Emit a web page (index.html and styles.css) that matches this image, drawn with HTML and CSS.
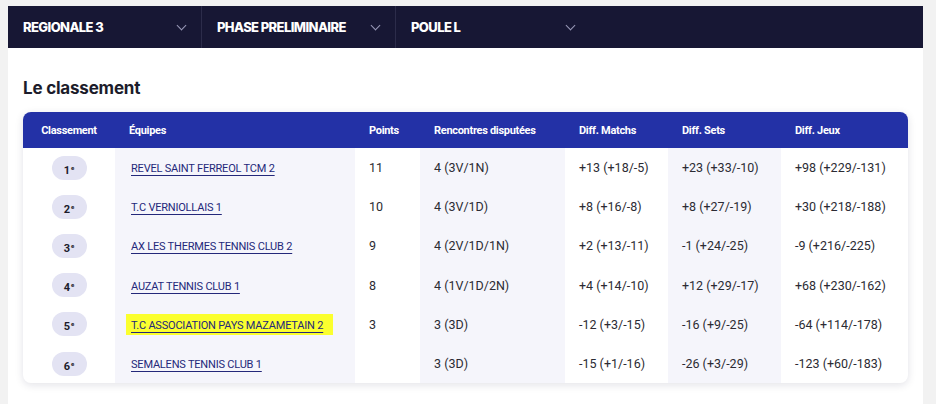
FILE: index.html
```html
<!DOCTYPE html>
<html lang="fr">
<head>
  <meta charset="UTF-8">
  <meta name="viewport" content="width=device-width, initial-scale=1.0">
  <title>Le classement</title>
  <link rel="stylesheet" href="styles.css">
</head>
<body>
  <div class="page">
    <nav class="filters">
      <div class="filter">REGIONALE 3 <span class="chevron"></span></div>
      <div class="filter">PHASE PRELIMINAIRE <span class="chevron"></span></div>
      <div class="filter">POULE L <span class="chevron"></span></div>
    </nav>

    <section class="content">
      <h2>Le classement</h2>
      <div class="card">
        <table class="ranking">
          <colgroup>
            <col class="c-rank">
            <col class="c-team">
            <col class="c-pts">
            <col class="c-played">
            <col class="c-matchs">
            <col class="c-sets">
            <col class="c-jeux">
          </colgroup>
          <thead>
            <tr>
              <th class="center">Classement</th>
              <th>Équipes</th>
              <th>Points</th>
              <th>Rencontres disputées</th>
              <th>Diff. Matchs</th>
              <th>Diff. Sets</th>
              <th>Diff. Jeux</th>
            </tr>
          </thead>
          <tbody>
            <tr>
              <td class="center"><span class="badge">1<sup>e</sup></span></td>
              <td class="shade"><a href="#">REVEL SAINT FERREOL TCM 2</a></td>
              <td>11</td>
              <td class="shade">4 (3V/1N)</td>
              <td>+13 (+18/-5)</td>
              <td class="shade">+23 (+33/-10)</td>
              <td>+98 (+229/-131)</td>
            </tr>
            <tr>
              <td class="center"><span class="badge">2<sup>e</sup></span></td>
              <td class="shade"><a href="#">T.C VERNIOLLAIS 1</a></td>
              <td>10</td>
              <td class="shade">4 (3V/1D)</td>
              <td>+8 (+16/-8)</td>
              <td class="shade">+8 (+27/-19)</td>
              <td>+30 (+218/-188)</td>
            </tr>
            <tr>
              <td class="center"><span class="badge">3<sup>e</sup></span></td>
              <td class="shade"><a href="#">AX LES THERMES TENNIS CLUB 2</a></td>
              <td>9</td>
              <td class="shade">4 (2V/1D/1N)</td>
              <td>+2 (+13/-11)</td>
              <td class="shade">-1 (+24/-25)</td>
              <td>-9 (+216/-225)</td>
            </tr>
            <tr>
              <td class="center"><span class="badge">4<sup>e</sup></span></td>
              <td class="shade"><a href="#">AUZAT TENNIS CLUB 1</a></td>
              <td>8</td>
              <td class="shade">4 (1V/1D/2N)</td>
              <td>+4 (+14/-10)</td>
              <td class="shade">+12 (+29/-17)</td>
              <td>+68 (+230/-162)</td>
            </tr>
            <tr>
              <td class="center"><span class="badge">5<sup>e</sup></span></td>
              <td class="shade"><span class="marker"><a href="#">T.C ASSOCIATION PAYS MAZAMETAIN 2</a></span></td>
              <td>3</td>
              <td class="shade">3 (3D)</td>
              <td>-12 (+3/-15)</td>
              <td class="shade">-16 (+9/-25)</td>
              <td>-64 (+114/-178)</td>
            </tr>
            <tr>
              <td class="center"><span class="badge">6<sup>e</sup></span></td>
              <td class="shade"><a href="#">SEMALENS TENNIS CLUB 1</a></td>
              <td></td>
              <td class="shade">3 (3D)</td>
              <td>-15 (+1/-16)</td>
              <td class="shade">-26 (+3/-29)</td>
              <td>-123 (+60/-183)</td>
            </tr>
          </tbody>
        </table>
      </div>
    </section>
  </div>
</body>
</html>
```

FILE: styles.css
```css
:root {
  --navy: #171734;
  --blue: #2331a6;
  --shade: #f5f5fb;
  --badge: #e3e3f3;
  --link: #24287a;
  --text: #2b2b33;
  --page-bg: #f2f2f2;
}
* { box-sizing: border-box; margin: 0; padding: 0; }
body {
  background: var(--page-bg);
  padding: 6px 13px 0 8px;
  font-family: Roboto, "Liberation Sans", sans-serif;
  color: var(--text);
}
.page {
  background: #ffffff;
  min-height: 398px;
}

/* barre de filtres */
.filters {
  display: flex;
  height: 42px;
  background: var(--navy);
}
.filter {
  width: 194px;
  display: flex;
  align-items: center;
  justify-content: space-between;
  padding: 0 13px 0 15px;
  border-right: 1px solid #2c2c4a;
  color: #ffffff;
  font-family: Inter, "Liberation Sans", sans-serif;
  font-weight: 800;
  font-size: 13px;
  letter-spacing: -0.6px;
}
.filter:last-child { border-right: none; }
.chevron {
  width: 7px;
  height: 7px;
  border-right: 1px solid #9a9ab8;
  border-bottom: 1px solid #9a9ab8;
  transform: rotate(45deg);
  margin: -4px 3px 0 0;
}

/* contenu */
.content {
  padding: 30px 15px 20px;
}
.content h2 {
  font-family: Inter, "Liberation Sans", sans-serif;
  font-size: 17px;
  font-weight: 700;
  color: #1c1c2b;
  letter-spacing: -0.2px;
  margin-bottom: 14px;
}
.card {
  width: 885px;
  border-radius: 8px;
  overflow: hidden;
  background: #ffffff;
  box-shadow: 0 2px 8px rgba(20, 20, 60, 0.12);
}
.ranking {
  width: 100%;
  border-collapse: collapse;
  table-layout: fixed;
}
.c-rank { width: 92px; }
.c-team { width: 240px; }
.c-pts { width: 65px; }
.c-played { width: 145px; }
.c-matchs { width: 103px; }
.c-sets { width: 113px; }
.c-jeux { width: 127px; }

.ranking th {
  background: var(--blue);
  color: #ffffff;
  font-size: 11px;
  font-weight: 700;
  letter-spacing: -0.3px;
  text-align: left;
  height: 36px;
  padding: 0 14px;
}
.ranking td {
  height: 39.2px;
  padding: 0 14px;
  font-size: 12.5px;
  color: var(--text);
  white-space: nowrap;
}
.ranking .center { text-align: center; padding: 0; }
.ranking td.shade { background: var(--shade); }
.ranking td.shade:nth-child(2) { padding-left: 16px; }

.badge {
  display: inline-block;
  width: 35px;
  height: 24px;
  line-height: 24px;
  border-radius: 12px;
  background: var(--badge);
  font-size: 11px;
  font-weight: 700;
  color: #1c1c2b;
}
.badge sup {
  font-size: 6px;
  vertical-align: 4px;
  margin-left: 1px;
}
.ranking a {
  color: var(--link);
  font-size: 11px;
  text-decoration: underline;
  text-underline-offset: 3px;
  letter-spacing: -0.2px;
}
.marker {
  background: #fbff2e;
  padding: 3px 10px 3px 5px;
  margin-left: -5px;
}
```
